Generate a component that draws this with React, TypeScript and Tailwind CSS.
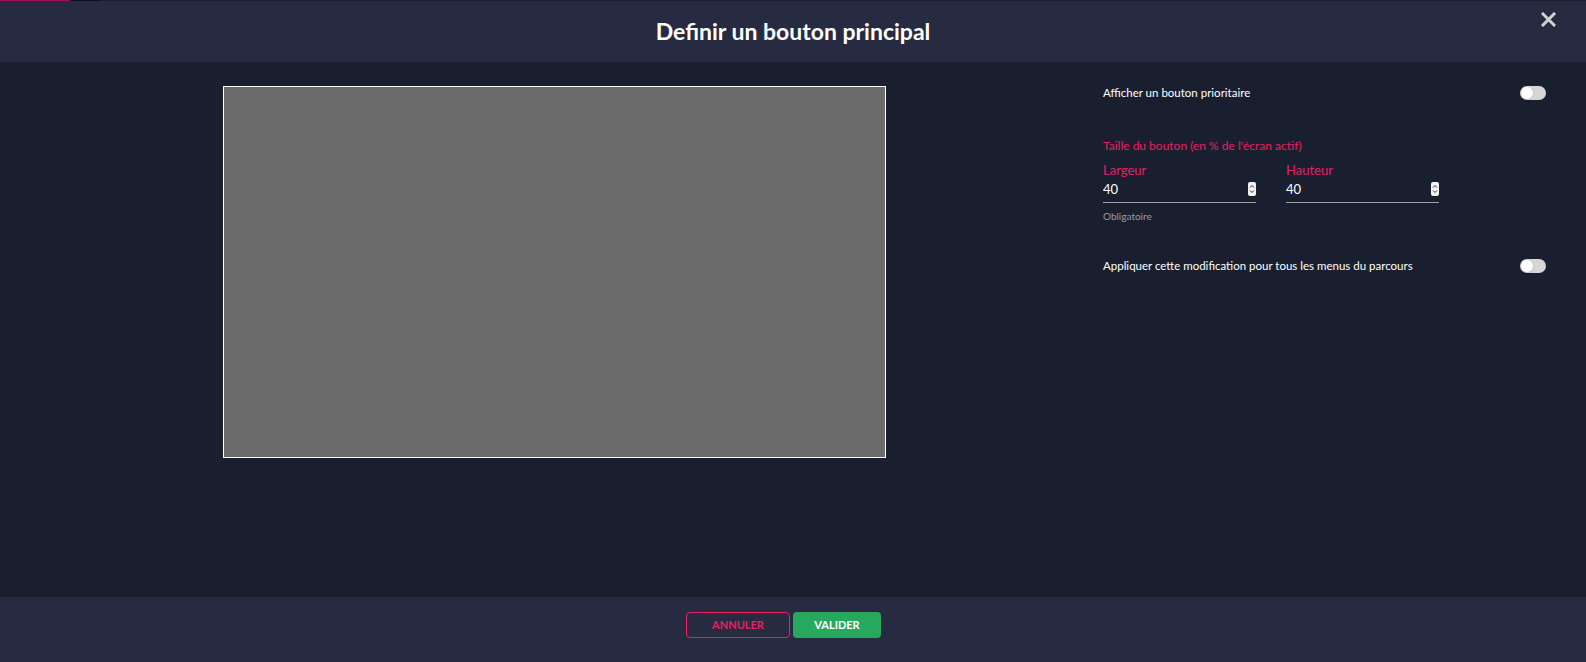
import { useState } from 'react'

const font = { fontFamily: 'Lato, "Open Sans", sans-serif' }

function Toggle({ on, onChange }: { on: boolean; onChange: () => void }) {
  return (
    <button
      onClick={onChange}
      className={`relative h-[14px] w-[26px] rounded-full ${on ? 'bg-[#e91e63]' : 'bg-[#d6d6d6]'}`}
    >
      <span
        className={`absolute top-[1px] h-[12px] w-[12px] rounded-full bg-white shadow ${on ? 'left-[13px]' : 'left-[1px]'}`}
      />
    </button>
  )
}

function Spinner() {
  return (
    <svg width="8" height="14" viewBox="0 0 8 14" className="shrink-0">
      <rect x="0" y="0" width="8" height="14" rx="2" fill="#f2f2f2" />
      <path d="M2 5.5 L4 3.5 L6 5.5" stroke="#333" strokeWidth="1" fill="none" />
      <path d="M2 8.5 L4 10.5 L6 8.5" stroke="#333" strokeWidth="1" fill="none" />
    </svg>
  )
}

function NumberField({ label, value, setValue }: { label: string; value: number; setValue: (v: number) => void }) {
  return (
    <div className="w-[153px]">
      <p className="text-[13px] leading-[18px] text-[#e91e63]">{label}</p>
      <div className="mt-[2px] flex items-center border-b border-[#a3a3a3] pb-[5px]">
        <input
          value={value}
          onChange={e => setValue(Number(e.target.value))}
          className="w-full bg-transparent text-[13px] leading-[16px] text-white outline-none"
          style={font}
        />
        <Spinner />
      </div>
    </div>
  )
}

export default function App() {
  const [priority, setPriority] = useState(false)
  const [applyAll, setApplyAll] = useState(false)
  const [width, setWidth] = useState(40)
  const [height, setHeight] = useState(40)

  return (
    <div className="flex h-[662px] w-full flex-col bg-[#1a1f2f]" style={font}>
      {/* progress strip */}
      <div className="flex h-[1px] bg-[#1a1f2e]">
        <div className="w-[70px] bg-[#a3134b]" />
        <div className="w-[31px] bg-[#0e1018]" />
      </div>

      {/* header */}
      <header className="relative flex h-[61px] items-center justify-center bg-[#262b41]">
        <h1 className="text-[23px] font-bold text-white">Definir un bouton principal</h1>
        <button className="absolute right-[30px] top-[11px] text-[#d2d2d2]">
          <svg width="15" height="15" viewBox="0 0 15 15">
            <path d="M2 2 L13 13 M13 2 L2 13" stroke="currentColor" strokeWidth="3" strokeLinecap="square" />
          </svg>
        </button>
      </header>

      {/* body */}
      <main className="flex flex-1">
        <div className="flex w-[1103px] justify-center pl-[6px] pt-[24px]">
          <div className="h-[372px] w-[663px] border border-white bg-[#6b6b6b]" />
        </div>

        <div className="w-[443px] pt-[24px] text-white">
          <div className="flex h-[14px] items-center justify-between">
            <span className="text-[11.5px] font-normal">Afficher un bouton prioritaire</span>
            <Toggle on={priority} onChange={() => setPriority(!priority)} />
          </div>

          <p className="mt-[37px] text-[12px] leading-[18px] text-[#e91e63]">
            Taille du bouton (en % de l'écran actif)
          </p>

          <div className="mt-[6px] flex gap-[30px]">
            <NumberField label="Largeur" value={width} setValue={setWidth} />
            <NumberField label="Hauteur" value={height} setValue={setHeight} />
          </div>
          <p className="mt-[6px] text-[10px] text-[#9a9ca5]">Obligatoire</p>

          <div className="mt-[35px] flex h-[14px] items-center justify-between">
            <span className="text-[11.5px] font-normal">
              Appliquer cette modification pour tous les menus du parcours
            </span>
            <Toggle on={applyAll} onChange={() => setApplyAll(!applyAll)} />
          </div>
        </div>
      </main>

      {/* footer */}
      <footer className="flex h-[65px] justify-center gap-[3px] bg-[#262b41] pr-[19px] pt-[15px]">
        <button className="h-[26px] w-[104px] rounded-[4px] border border-[#e91e63] text-[11px] font-bold text-[#e91e63]">
          ANNULER
        </button>
        <button className="h-[26px] w-[88px] rounded-[4px] bg-[#27a85f] text-[11px] font-bold text-white">
          VALIDER
        </button>
      </footer>
    </div>
  )
}
